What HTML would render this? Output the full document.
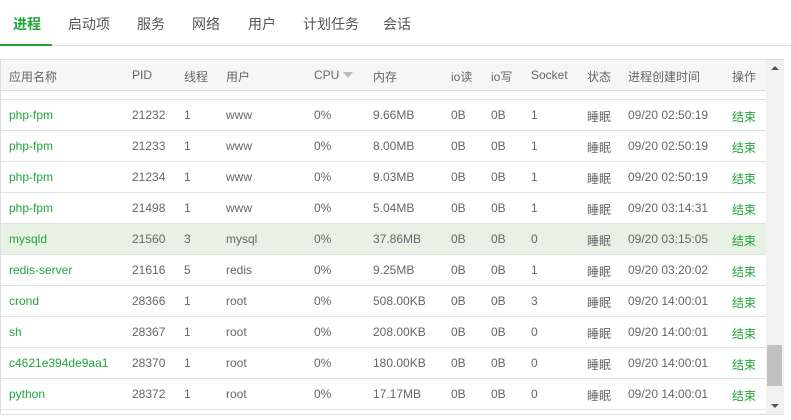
<!DOCTYPE html><html><head><style>
body{margin:0;width:791px;height:420px;background:#fff;font-family:"Liberation Sans","Noto Sans CJK SC",sans-serif;font-size:12px;color:#666;position:relative;overflow:hidden}
.tabs{position:absolute;left:0;top:0;width:791px;height:45px;border-bottom:1px solid #ddd}
.tab{position:absolute;top:14px;font-size:14px;color:#555}
.tab.on{color:#20a53a;font-weight:bold}
.ul{position:absolute;left:0;top:44px;width:52px;height:2px;background:#20a53a}
.box{position:absolute;left:0;top:59px;width:783px;height:354px;border:1px solid #ddd;border-right:none;overflow:hidden}
.hd{position:absolute;left:0;top:0;width:765px;height:30px;background:#f6f6f6;border-bottom:1px solid #ddd}
.c{position:absolute;white-space:nowrap}
.row{position:absolute;left:0;width:765px;height:30px;border-bottom:1px solid #e2e2e2}
.g{color:#20a53a}
.sb{position:absolute;left:765px;top:0;width:18px;height:354px;background:#f1f1f1}
</style></head><body>
<div class="tabs">
<span class="tab on" style="left:13px">进程</span>
<span class="tab" style="left:68px">启动项</span>
<span class="tab" style="left:137px">服务</span>
<span class="tab" style="left:192px">网络</span>
<span class="tab" style="left:248px">用户</span>
<span class="tab" style="left:303px">计划任务</span>
<span class="tab" style="left:383px">会话</span>
<div class="ul"></div></div>
<div class="box">
<div class="hd">
<span class="c" style="left:8px;top:8px">应用名称</span><span class="c" style="left:131px;top:8px">PID</span><span class="c" style="left:183px;top:8px">线程</span><span class="c" style="left:225px;top:8px">用户</span><span class="c" style="left:313px;top:8px">CPU <span style="display:inline-block;width:0;height:0;border:5px solid transparent;border-top:6px solid #bbb;vertical-align:-4px"></span></span><span class="c" style="left:372px;top:8px">内存</span><span class="c" style="left:450px;top:8px">io读</span><span class="c" style="left:490px;top:8px">io写</span><span class="c" style="left:530px;top:8px">Socket</span><span class="c" style="left:586px;top:8px">状态</span><span class="c" style="left:627px;top:8px">进程创建时间</span><span class="c" style="left:731px;top:8px">操作</span>
</div>
<div class="row" style="top:9px;height:30px"></div>
<div id="rows"></div>
<div class="row" style="top:348px"></div>
<div class="sb"><div style="position:absolute;left:5px;top:6px;border:4px solid transparent;border-bottom:4px solid #555;border-top:none"></div><div style="position:absolute;left:1px;top:285px;width:15px;height:41px;background:#c1c1c1"></div><div style="position:absolute;left:5px;top:344px;border:4px solid transparent;border-top:4px solid #555;border-bottom:none"></div></div>
</div>
<script>
var d=[["php-fpm","21232","1","www","9.66MB","1","09/20 02:50:19"],["php-fpm","21233","1","www","8.00MB","1","09/20 02:50:19"],["php-fpm","21234","1","www","9.03MB","1","09/20 02:50:19"],["php-fpm","21498","1","www","5.04MB","1","09/20 03:14:31"],["mysqld","21560","3","mysql","37.86MB","0","09/20 03:15:05"],["redis-server","21616","5","redis","9.25MB","1","09/20 03:20:02"],["crond","28366","1","root","508.00KB","3","09/20 14:00:01"],["sh","28367","1","root","208.00KB","0","09/20 14:00:01"],["c4621e394de9aa1","28370","1","root","180.00KB","0","09/20 14:00:01"],["python","28372","1","root","17.17MB","0","09/20 14:00:01"]];
var h="";d.forEach(function(r,i){var t=40+i*31;h+='<div class="row" style="top:'+t+'px;'+(i==4?'background:#e8f2e4':'')+'"><span class="c g" style="left:8px;top:8px">'+r[0]+'</span><span class="c" style="left:131px;top:8px">'+r[1]+'</span><span class="c" style="left:183px;top:8px">'+r[2]+'</span><span class="c" style="left:225px;top:8px">'+r[3]+'</span><span class="c" style="left:313px;top:8px">0%</span><span class="c" style="left:372px;top:8px">'+r[4]+'</span><span class="c" style="left:450px;top:8px">0B</span><span class="c" style="left:490px;top:8px">0B</span><span class="c" style="left:530px;top:8px">'+r[5]+'</span><span class="c" style="left:586px;top:8px">睡眠</span><span class="c" style="left:627px;top:8px">'+r[6]+'</span><span class="c g" style="left:731px;top:8px">结束</span></div>'});
document.getElementById("rows").outerHTML=h;
</script>
</body></html>
